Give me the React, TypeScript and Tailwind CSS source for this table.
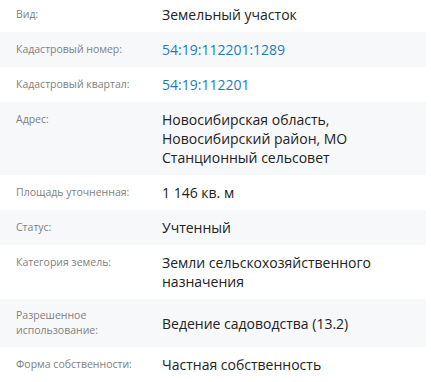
import React from "react";

type Row = { label: React.ReactNode; value: React.ReactNode; link?: boolean; gray?: boolean; center?: boolean; first?: boolean };

const rows: Row[] = [
  { label: "Вид:", value: "Земельный участок", first: true },
  { label: "Кадастровый номер:", value: "54:19:112201:1289", link: true, gray: true },
  { label: "Кадастровый квартал:", value: "54:19:112201", link: true },
  { label: "Адрес:", value: (<>Новосибирская область,<br />Новосибирский район, МО<br />Станционный сельсовет</>), gray: true },
  { label: "Площадь уточненная:", value: "1 146 кв. м" },
  { label: "Статус:", value: "Учтенный", gray: true },
  { label: "Категория земель:", value: (<>Земли сельскохозяйственного<br />назначения</>) },
  { label: (<>Разрешенное<br />использование:</>), value: "Ведение садоводства (13.2)", gray: true, center: true },
  { label: "Форма собственности:", value: "Частная собственность" },
];

export default function App() {
  return (
    <div className="w-[431px] h-[382px] bg-white overflow-hidden" style={{ fontFamily: '"Open Sans", "Noto Sans", sans-serif' }}>
      <div className="w-[431px] border-b border-[#ececec]">
        {rows.map((r, i) => (
          <div
            key={i}
            className={
              "w-[426px] flex pl-4 " +
              (r.gray ? "bg-[#f7f8fa] " : "bg-white ") +
              (r.center ? "items-center py-[9px] " : "items-start py-2 ") +
              (r.first ? "pt-[5px] " : "")
            }
          >
            <div className={"w-[146px] shrink-0 text-[10.5px] text-[#808080] " + (r.center ? "leading-[15px]" : "leading-[19px]")}>
              {r.label}
            </div>
            <div className={"text-[14px] leading-[19px] " + (r.link ? "text-[#1f7ac0]" : "text-[#222]")}>{r.value}</div>
          </div>
        ))}
      </div>
    </div>
  );
}
